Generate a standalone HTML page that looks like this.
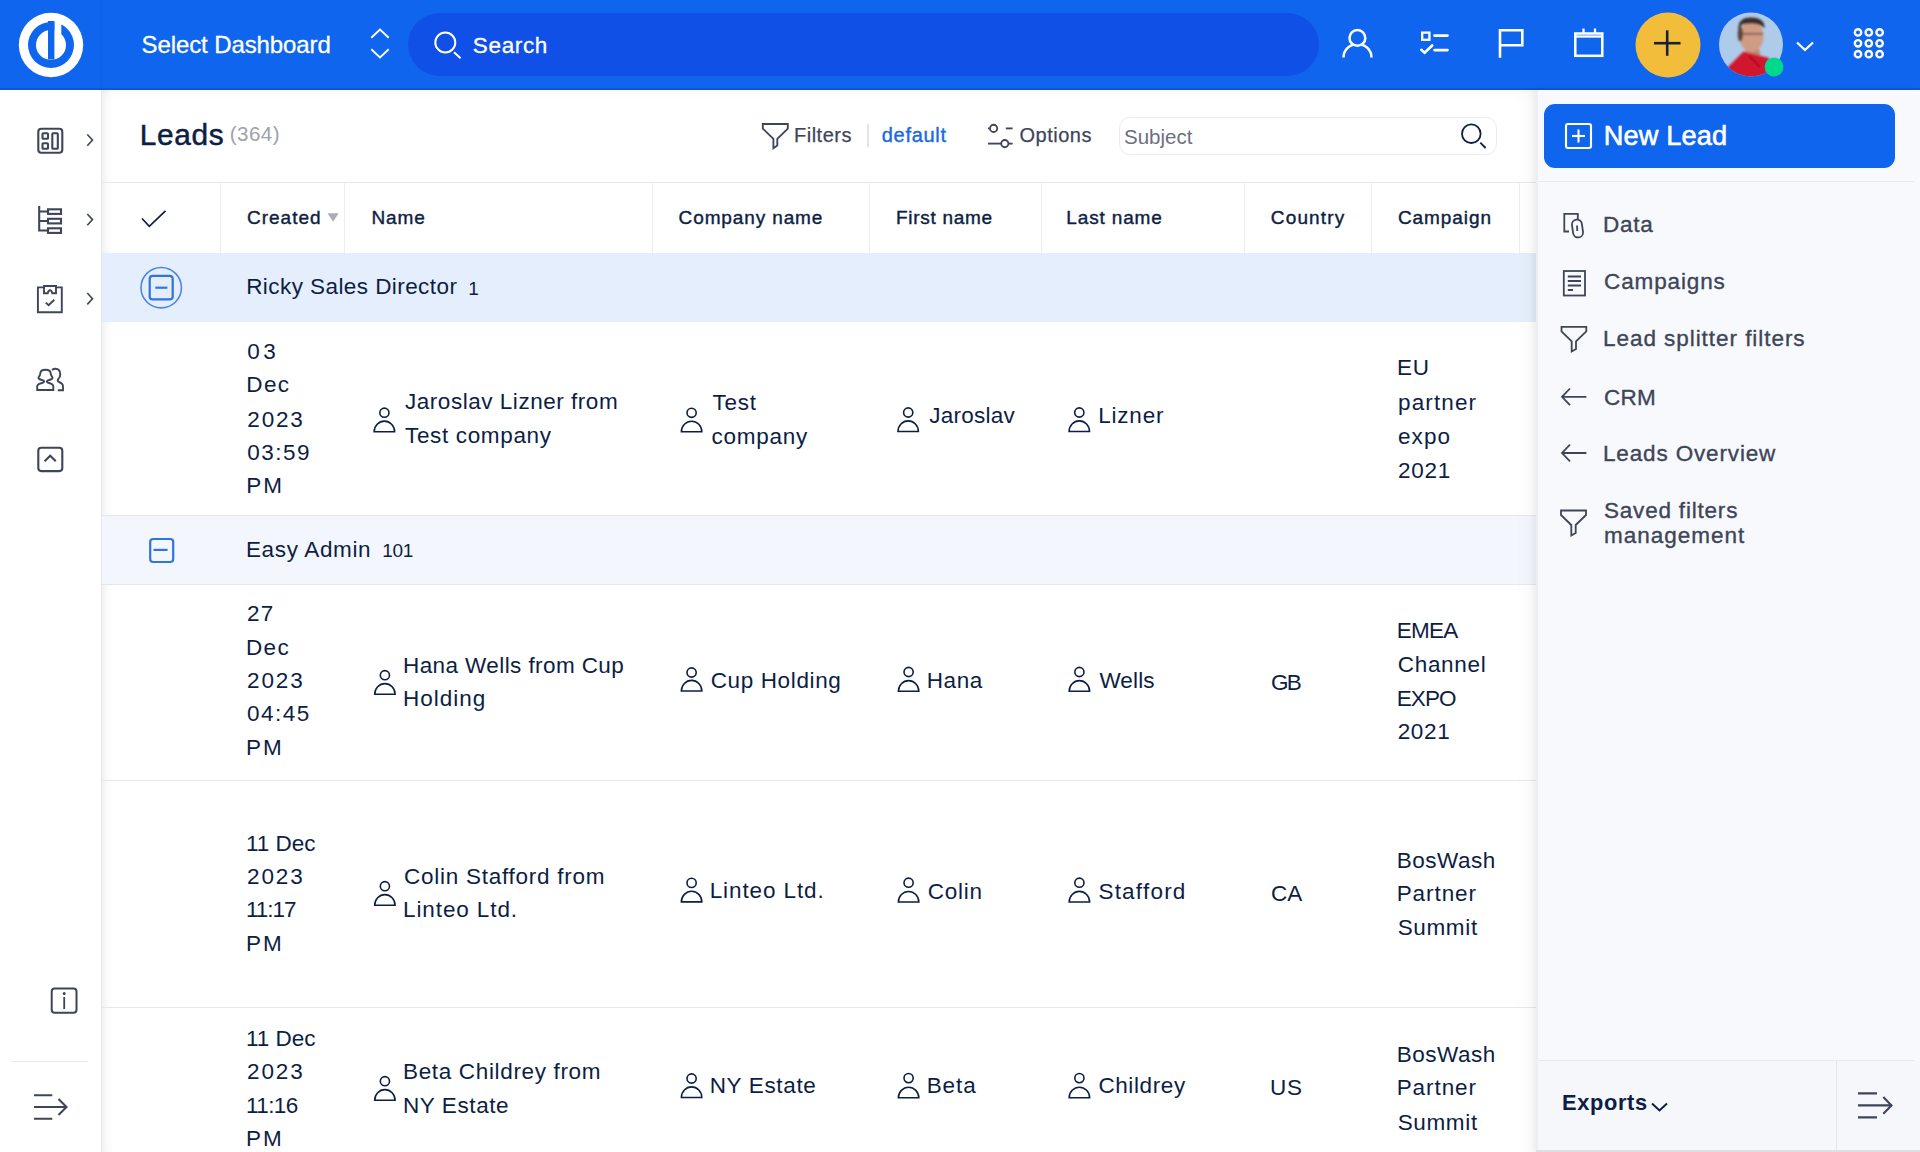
<!DOCTYPE html>
<html><head><meta charset="utf-8">
<style>
*{margin:0;padding:0;box-sizing:border-box}
html,body{width:1920px;height:1152px;overflow:hidden;background:#fff;font-family:"Liberation Sans",sans-serif}
.a{position:absolute}
.t{position:absolute;white-space:pre;font-family:"Liberation Sans",sans-serif}
svg.ov{position:absolute;left:0;top:0;width:1920px;height:1152px}
</style></head><body>
<!-- header -->
<div class="a" style="left:0;top:0;width:1920px;height:90px;background:#1065ee"></div>
<div class="a" style="left:0;top:88px;width:1920px;height:2px;background:#0c56d8"></div>
<div class="a" style="left:101px;top:0;width:1px;height:88px;background:#0e61e8"></div>
<div class="a" style="left:408px;top:13px;width:911px;height:63px;border-radius:32px;background:#1150e6"></div>
<!-- sidebar -->
<div class="a" style="left:0;top:90px;width:102px;height:1062px;background:#fff"></div>
<div class="a" style="left:101px;top:90px;width:1px;height:1062px;background:#e6e7ea"></div>
<div class="a" style="left:12px;top:1061px;width:76px;height:1px;background:#e8eaee"></div>
<!-- main -->
<div class="a" style="left:102px;top:90px;width:1434px;height:1062px;background:#fff;box-shadow:inset 10px 0 10px -7px rgba(0,0,0,0.07), inset 0 8px 8px -6px rgba(0,0,0,0.045)"></div>
<div class="a" style="left:102px;top:182px;width:1434px;height:1px;background:#e7e9ee"></div>
<div class="a" style="left:102px;top:253px;width:1434px;height:69px;background:#e5eefc"></div>
<div class="a" style="left:102px;top:515px;width:1434px;height:1px;background:#e4e8ee"></div>
<div class="a" style="left:102px;top:516px;width:1434px;height:68px;background:#f3f7fd"></div>
<div class="a" style="left:102px;top:584px;width:1434px;height:1px;background:#e4e8ee"></div>
<div class="a" style="left:102px;top:780px;width:1434px;height:1px;background:#e6e9ee"></div>
<div class="a" style="left:102px;top:1007px;width:1434px;height:1px;background:#e6e9ee"></div>
<!-- col separators -->
<div class="a" style="left:220px;top:183px;width:1px;height:70px;background:#eceef2"></div>
<div class="a" style="left:344px;top:183px;width:1px;height:70px;background:#eceef2"></div>
<div class="a" style="left:652px;top:183px;width:1px;height:70px;background:#eceef2"></div>
<div class="a" style="left:869px;top:183px;width:1px;height:70px;background:#eceef2"></div>
<div class="a" style="left:1041px;top:183px;width:1px;height:70px;background:#eceef2"></div>
<div class="a" style="left:1244px;top:183px;width:1px;height:70px;background:#eceef2"></div>
<div class="a" style="left:1371px;top:183px;width:1px;height:70px;background:#eceef2"></div>
<div class="a" style="left:1519px;top:183px;width:1px;height:70px;background:#eceef2"></div>
<div class="a" style="left:1516px;top:89px;width:20px;height:1063px;background:linear-gradient(to right,rgba(0,0,0,0),rgba(0,0,0,0.025))"></div>
<!-- filter bar -->
<div class="a" style="left:867px;top:124px;width:2px;height:23px;background:#e1e4ea"></div>
<div class="a" style="left:1119px;top:117px;width:378px;height:38px;border:1px solid #e8ebf2;border-radius:11px;background:#fff"></div>
<!-- right panel -->
<div class="a" style="left:1536px;top:90px;width:384px;height:1062px;background:#f8f9fc;box-shadow:-3px 0 6px rgba(0,0,0,0.05)"></div>
<div class="a" style="left:1536px;top:90px;width:2px;height:1062px;background:#eceef2"></div>
<div class="a" style="left:1538px;top:181px;width:376px;height:1px;background:#e8eaef"></div>
<div class="a" style="left:1538px;top:1060px;width:376px;height:1px;background:#e6e8ee"></div>
<div class="a" style="left:1538px;top:1061px;width:382px;height:91px;background:#f5f7fb"></div>
<div class="a" style="left:1836px;top:1061px;width:1px;height:91px;background:#e4e6ec"></div>
<div class="a" style="left:1536px;top:1150px;width:384px;height:2px;background:#dde0e6"></div>
<div class="a" style="left:1543.5px;top:103.5px;width:351px;height:64px;border-radius:11px;background:#1065ee"></div>
<div class="t" style="left:141.5px;top:28.7px;font-size:24px;line-height:31px;font-weight:400;color:#ffffff;letter-spacing:-0.10px;-webkit-text-stroke:0.3px #ffffff">Select Dashboard</div>
<div class="t" style="left:472.8px;top:30.7px;font-size:22.5px;line-height:29px;font-weight:400;color:#ffffff;letter-spacing:0.66px;-webkit-text-stroke:0.3px #ffffff">Search</div>
<div class="t" style="left:139.7px;top:114.9px;font-size:29.8px;line-height:39px;font-weight:400;color:#0d1e44;letter-spacing:0.70px;-webkit-text-stroke:0.5px #0d1e44">Leads</div>
<div class="t" style="left:229.8px;top:120.2px;font-size:20.5px;line-height:27px;font-weight:400;color:#9da2ac;letter-spacing:0.47px;-webkit-text-stroke:0px #9da2ac">(364)</div>
<div class="t" style="left:794.0px;top:122.2px;font-size:20px;line-height:26px;font-weight:400;color:#3e4559;letter-spacing:0.50px;-webkit-text-stroke:0.25px #3e4559">Filters</div>
<div class="t" style="left:881.8px;top:122.2px;font-size:20px;line-height:26px;font-weight:400;color:#1b6ae0;letter-spacing:0.70px;-webkit-text-stroke:0.4px #1b6ae0">default</div>
<div class="t" style="left:1019.5px;top:122.2px;font-size:20px;line-height:26px;font-weight:400;color:#3e4559;letter-spacing:0.50px;-webkit-text-stroke:0.25px #3e4559">Options</div>
<div class="t" style="left:1124.0px;top:123.0px;font-size:20.5px;line-height:27px;font-weight:400;color:#6b7080;letter-spacing:0.00px;-webkit-text-stroke:0px #6b7080">Subject</div>
<div class="t" style="left:247.0px;top:205.3px;font-size:19px;line-height:25px;font-weight:400;color:#0d1e44;letter-spacing:1.00px;-webkit-text-stroke:0.4px #0d1e44">Created</div>
<div class="t" style="left:371.5px;top:205.3px;font-size:19px;line-height:25px;font-weight:400;color:#0d1e44;letter-spacing:0.90px;-webkit-text-stroke:0.4px #0d1e44">Name</div>
<div class="t" style="left:678.6px;top:205.3px;font-size:19px;line-height:25px;font-weight:400;color:#0d1e44;letter-spacing:0.88px;-webkit-text-stroke:0.4px #0d1e44">Company name</div>
<div class="t" style="left:895.9px;top:205.3px;font-size:19px;line-height:25px;font-weight:400;color:#0d1e44;letter-spacing:0.72px;-webkit-text-stroke:0.4px #0d1e44">First name</div>
<div class="t" style="left:1066.3px;top:205.3px;font-size:19px;line-height:25px;font-weight:400;color:#0d1e44;letter-spacing:0.85px;-webkit-text-stroke:0.4px #0d1e44">Last name</div>
<div class="t" style="left:1270.8px;top:205.3px;font-size:19px;line-height:25px;font-weight:400;color:#0d1e44;letter-spacing:1.15px;-webkit-text-stroke:0.4px #0d1e44">Country</div>
<div class="t" style="left:1397.9px;top:205.3px;font-size:19px;line-height:25px;font-weight:400;color:#0d1e44;letter-spacing:0.94px;-webkit-text-stroke:0.4px #0d1e44">Campaign</div>
<div class="t" style="left:246.2px;top:272.3px;font-size:22.5px;line-height:29px;font-weight:400;color:#0d1e44;letter-spacing:0.43px;-webkit-text-stroke:0px #0d1e44">Ricky Sales Director</div>
<div class="t" style="left:468.3px;top:275.5px;font-size:19px;line-height:25px;font-weight:400;color:#0d1e44;letter-spacing:0.00px;-webkit-text-stroke:0px #0d1e44">1</div>
<div class="t" style="left:245.9px;top:535.2px;font-size:22.5px;line-height:29px;font-weight:400;color:#0d1e44;letter-spacing:0.66px;-webkit-text-stroke:0px #0d1e44">Easy Admin</div>
<div class="t" style="left:382.3px;top:538.4px;font-size:19px;line-height:25px;font-weight:400;color:#0d1e44;letter-spacing:-0.40px;-webkit-text-stroke:0px #0d1e44">101</div>
<div class="t" style="left:247.3px;top:336.6px;font-size:22.5px;line-height:29px;font-weight:400;color:#0d1e44;letter-spacing:3.50px;-webkit-text-stroke:0px #0d1e44">03</div>
<div class="t" style="left:246.3px;top:369.9px;font-size:22.5px;line-height:29px;font-weight:400;color:#0d1e44;letter-spacing:1.35px;-webkit-text-stroke:0px #0d1e44">Dec</div>
<div class="t" style="left:247.3px;top:404.5px;font-size:22.5px;line-height:29px;font-weight:400;color:#0d1e44;letter-spacing:1.83px;-webkit-text-stroke:0px #0d1e44">2023</div>
<div class="t" style="left:247.3px;top:437.7px;font-size:22.5px;line-height:29px;font-weight:400;color:#0d1e44;letter-spacing:1.50px;-webkit-text-stroke:0px #0d1e44">03:59</div>
<div class="t" style="left:246.3px;top:471.0px;font-size:22.5px;line-height:29px;font-weight:400;color:#0d1e44;letter-spacing:2.00px;-webkit-text-stroke:0px #0d1e44">PM</div>
<div class="t" style="left:405.0px;top:387.4px;font-size:22.5px;line-height:29px;font-weight:400;color:#0d1e44;letter-spacing:0.53px;-webkit-text-stroke:0px #0d1e44">Jaroslav Lizner from</div>
<div class="t" style="left:405.0px;top:421.3px;font-size:22.5px;line-height:29px;font-weight:400;color:#0d1e44;letter-spacing:0.65px;-webkit-text-stroke:0px #0d1e44">Test company</div>
<div class="t" style="left:712.5px;top:387.5px;font-size:22.5px;line-height:29px;font-weight:400;color:#0d1e44;letter-spacing:0.77px;-webkit-text-stroke:0px #0d1e44">Test</div>
<div class="t" style="left:711.5px;top:421.7px;font-size:22.5px;line-height:29px;font-weight:400;color:#0d1e44;letter-spacing:0.73px;-webkit-text-stroke:0px #0d1e44">company</div>
<div class="t" style="left:929.2px;top:401.2px;font-size:22.5px;line-height:29px;font-weight:400;color:#0d1e44;letter-spacing:0.26px;-webkit-text-stroke:0px #0d1e44">Jaroslav</div>
<div class="t" style="left:1098.2px;top:401.2px;font-size:22.5px;line-height:29px;font-weight:400;color:#0d1e44;letter-spacing:0.80px;-webkit-text-stroke:0px #0d1e44">Lizner</div>
<div class="t" style="left:1397.0px;top:353.3px;font-size:22.5px;line-height:29px;font-weight:400;color:#0d1e44;letter-spacing:0.80px;-webkit-text-stroke:0px #0d1e44">EU</div>
<div class="t" style="left:1398.0px;top:387.5px;font-size:22.5px;line-height:29px;font-weight:400;color:#0d1e44;letter-spacing:1.12px;-webkit-text-stroke:0px #0d1e44">partner</div>
<div class="t" style="left:1398.0px;top:421.7px;font-size:22.5px;line-height:29px;font-weight:400;color:#0d1e44;letter-spacing:1.07px;-webkit-text-stroke:0px #0d1e44">expo</div>
<div class="t" style="left:1398.0px;top:456.0px;font-size:22.5px;line-height:29px;font-weight:400;color:#0d1e44;letter-spacing:0.73px;-webkit-text-stroke:0px #0d1e44">2021</div>
<div class="t" style="left:247.0px;top:599.4px;font-size:22.5px;line-height:29px;font-weight:400;color:#0d1e44;letter-spacing:1.30px;-webkit-text-stroke:0px #0d1e44">27</div>
<div class="t" style="left:246.0px;top:632.7px;font-size:22.5px;line-height:29px;font-weight:400;color:#0d1e44;letter-spacing:1.35px;-webkit-text-stroke:0px #0d1e44">Dec</div>
<div class="t" style="left:247.0px;top:666.0px;font-size:22.5px;line-height:29px;font-weight:400;color:#0d1e44;letter-spacing:1.90px;-webkit-text-stroke:0px #0d1e44">2023</div>
<div class="t" style="left:247.0px;top:699.4px;font-size:22.5px;line-height:29px;font-weight:400;color:#0d1e44;letter-spacing:1.50px;-webkit-text-stroke:0px #0d1e44">04:45</div>
<div class="t" style="left:246.0px;top:732.7px;font-size:22.5px;line-height:29px;font-weight:400;color:#0d1e44;letter-spacing:2.00px;-webkit-text-stroke:0px #0d1e44">PM</div>
<div class="t" style="left:403.0px;top:651.0px;font-size:22.5px;line-height:29px;font-weight:400;color:#0d1e44;letter-spacing:0.41px;-webkit-text-stroke:0px #0d1e44">Hana Wells from Cup</div>
<div class="t" style="left:403.0px;top:684.4px;font-size:22.5px;line-height:29px;font-weight:400;color:#0d1e44;letter-spacing:1.00px;-webkit-text-stroke:0px #0d1e44">Holding</div>
<div class="t" style="left:710.7px;top:666.0px;font-size:22.5px;line-height:29px;font-weight:400;color:#0d1e44;letter-spacing:0.63px;-webkit-text-stroke:0px #0d1e44">Cup Holding</div>
<div class="t" style="left:926.7px;top:665.6px;font-size:22.5px;line-height:29px;font-weight:400;color:#0d1e44;letter-spacing:0.60px;-webkit-text-stroke:0px #0d1e44">Hana</div>
<div class="t" style="left:1099.4px;top:665.6px;font-size:22.5px;line-height:29px;font-weight:400;color:#0d1e44;letter-spacing:0.15px;-webkit-text-stroke:0px #0d1e44">Wells</div>
<div class="t" style="left:1271.0px;top:668.1px;font-size:22.5px;line-height:29px;font-weight:400;color:#0d1e44;letter-spacing:-1.80px;-webkit-text-stroke:0px #0d1e44">GB</div>
<div class="t" style="left:1396.7px;top:616.3px;font-size:22.5px;line-height:29px;font-weight:400;color:#0d1e44;letter-spacing:-0.70px;-webkit-text-stroke:0px #0d1e44">EMEA</div>
<div class="t" style="left:1397.7px;top:650.4px;font-size:22.5px;line-height:29px;font-weight:400;color:#0d1e44;letter-spacing:0.72px;-webkit-text-stroke:0px #0d1e44">Channel</div>
<div class="t" style="left:1396.7px;top:683.9px;font-size:22.5px;line-height:29px;font-weight:400;color:#0d1e44;letter-spacing:-0.90px;-webkit-text-stroke:0px #0d1e44">EXPO</div>
<div class="t" style="left:1397.7px;top:717.3px;font-size:22.5px;line-height:29px;font-weight:400;color:#0d1e44;letter-spacing:0.67px;-webkit-text-stroke:0px #0d1e44">2021</div>
<div class="t" style="left:246.0px;top:828.7px;font-size:22.5px;line-height:29px;font-weight:400;color:#0d1e44;letter-spacing:0.00px;-webkit-text-stroke:0px #0d1e44">11 Dec</div>
<div class="t" style="left:247.0px;top:862.0px;font-size:22.5px;line-height:29px;font-weight:400;color:#0d1e44;letter-spacing:1.90px;-webkit-text-stroke:0px #0d1e44">2023</div>
<div class="t" style="left:246.0px;top:895.4px;font-size:22.5px;line-height:29px;font-weight:400;color:#0d1e44;letter-spacing:-1.00px;-webkit-text-stroke:0px #0d1e44">11:17</div>
<div class="t" style="left:246.0px;top:929.4px;font-size:22.5px;line-height:29px;font-weight:400;color:#0d1e44;letter-spacing:2.00px;-webkit-text-stroke:0px #0d1e44">PM</div>
<div class="t" style="left:404.0px;top:862.0px;font-size:22.5px;line-height:29px;font-weight:400;color:#0d1e44;letter-spacing:0.74px;-webkit-text-stroke:0px #0d1e44">Colin Stafford from</div>
<div class="t" style="left:403.0px;top:895.4px;font-size:22.5px;line-height:29px;font-weight:400;color:#0d1e44;letter-spacing:0.90px;-webkit-text-stroke:0px #0d1e44">Linteo Ltd.</div>
<div class="t" style="left:709.7px;top:876.0px;font-size:22.5px;line-height:29px;font-weight:400;color:#0d1e44;letter-spacing:0.90px;-webkit-text-stroke:0px #0d1e44">Linteo Ltd.</div>
<div class="t" style="left:927.7px;top:877.0px;font-size:22.5px;line-height:29px;font-weight:400;color:#0d1e44;letter-spacing:0.78px;-webkit-text-stroke:0px #0d1e44">Colin</div>
<div class="t" style="left:1098.4px;top:877.0px;font-size:22.5px;line-height:29px;font-weight:400;color:#0d1e44;letter-spacing:1.23px;-webkit-text-stroke:0px #0d1e44">Stafford</div>
<div class="t" style="left:1271.0px;top:879.1px;font-size:22.5px;line-height:29px;font-weight:400;color:#0d1e44;letter-spacing:-0.10px;-webkit-text-stroke:0px #0d1e44">CA</div>
<div class="t" style="left:1396.7px;top:845.7px;font-size:22.5px;line-height:29px;font-weight:400;color:#0d1e44;letter-spacing:0.52px;-webkit-text-stroke:0px #0d1e44">BosWash</div>
<div class="t" style="left:1396.7px;top:879.1px;font-size:22.5px;line-height:29px;font-weight:400;color:#0d1e44;letter-spacing:0.92px;-webkit-text-stroke:0px #0d1e44">Partner</div>
<div class="t" style="left:1397.7px;top:912.6px;font-size:22.5px;line-height:29px;font-weight:400;color:#0d1e44;letter-spacing:0.64px;-webkit-text-stroke:0px #0d1e44">Summit</div>
<div class="t" style="left:246.0px;top:1024.4px;font-size:22.5px;line-height:29px;font-weight:400;color:#0d1e44;letter-spacing:0.00px;-webkit-text-stroke:0px #0d1e44">11 Dec</div>
<div class="t" style="left:247.0px;top:1057.0px;font-size:22.5px;line-height:29px;font-weight:400;color:#0d1e44;letter-spacing:1.90px;-webkit-text-stroke:0px #0d1e44">2023</div>
<div class="t" style="left:246.0px;top:1091.0px;font-size:22.5px;line-height:29px;font-weight:400;color:#0d1e44;letter-spacing:-0.58px;-webkit-text-stroke:0px #0d1e44">11:16</div>
<div class="t" style="left:246.0px;top:1124.4px;font-size:22.5px;line-height:29px;font-weight:400;color:#0d1e44;letter-spacing:2.00px;-webkit-text-stroke:0px #0d1e44">PM</div>
<div class="t" style="left:403.0px;top:1057.0px;font-size:22.5px;line-height:29px;font-weight:400;color:#0d1e44;letter-spacing:0.66px;-webkit-text-stroke:0px #0d1e44">Beta Childrey from</div>
<div class="t" style="left:403.0px;top:1091.0px;font-size:22.5px;line-height:29px;font-weight:400;color:#0d1e44;letter-spacing:0.59px;-webkit-text-stroke:0px #0d1e44">NY Estate</div>
<div class="t" style="left:709.7px;top:1071.0px;font-size:22.5px;line-height:29px;font-weight:400;color:#0d1e44;letter-spacing:0.66px;-webkit-text-stroke:0px #0d1e44">NY Estate</div>
<div class="t" style="left:926.7px;top:1071.0px;font-size:22.5px;line-height:29px;font-weight:400;color:#0d1e44;letter-spacing:0.93px;-webkit-text-stroke:0px #0d1e44">Beta</div>
<div class="t" style="left:1098.4px;top:1071.0px;font-size:22.5px;line-height:29px;font-weight:400;color:#0d1e44;letter-spacing:0.61px;-webkit-text-stroke:0px #0d1e44">Childrey</div>
<div class="t" style="left:1270.0px;top:1072.7px;font-size:22.5px;line-height:29px;font-weight:400;color:#0d1e44;letter-spacing:0.80px;-webkit-text-stroke:0px #0d1e44">US</div>
<div class="t" style="left:1396.7px;top:1040.0px;font-size:22.5px;line-height:29px;font-weight:400;color:#0d1e44;letter-spacing:0.52px;-webkit-text-stroke:0px #0d1e44">BosWash</div>
<div class="t" style="left:1396.7px;top:1072.7px;font-size:22.5px;line-height:29px;font-weight:400;color:#0d1e44;letter-spacing:0.92px;-webkit-text-stroke:0px #0d1e44">Partner</div>
<div class="t" style="left:1397.7px;top:1108.0px;font-size:22.5px;line-height:29px;font-weight:400;color:#0d1e44;letter-spacing:0.64px;-webkit-text-stroke:0px #0d1e44">Summit</div>
<div class="t" style="left:1603.7px;top:118.0px;font-size:27.2px;line-height:35px;font-weight:400;color:#ffffff;letter-spacing:0.14px;-webkit-text-stroke:0.6px #ffffff">New Lead</div>
<div class="t" style="left:1603.0px;top:210.2px;font-size:22.5px;line-height:29px;font-weight:400;color:#3e4559;letter-spacing:0.77px;-webkit-text-stroke:0.35px #3e4559">Data</div>
<div class="t" style="left:1604.0px;top:267.4px;font-size:22.5px;line-height:29px;font-weight:400;color:#3e4559;letter-spacing:0.88px;-webkit-text-stroke:0.35px #3e4559">Campaigns</div>
<div class="t" style="left:1603.0px;top:324.4px;font-size:22.5px;line-height:29px;font-weight:400;color:#3e4559;letter-spacing:0.95px;-webkit-text-stroke:0.35px #3e4559">Lead splitter filters</div>
<div class="t" style="left:1604.0px;top:382.7px;font-size:22.5px;line-height:29px;font-weight:400;color:#3e4559;letter-spacing:0.20px;-webkit-text-stroke:0.35px #3e4559">CRM</div>
<div class="t" style="left:1603.0px;top:438.7px;font-size:22.5px;line-height:29px;font-weight:400;color:#3e4559;letter-spacing:0.85px;-webkit-text-stroke:0.35px #3e4559">Leads Overview</div>
<div class="t" style="left:1604.0px;top:495.7px;font-size:22.5px;line-height:29px;font-weight:400;color:#3e4559;letter-spacing:0.80px;-webkit-text-stroke:0.35px #3e4559">Saved filters</div>
<div class="t" style="left:1604.0px;top:520.7px;font-size:22.5px;line-height:29px;font-weight:400;color:#3e4559;letter-spacing:1.00px;-webkit-text-stroke:0.35px #3e4559">management</div>
<div class="t" style="left:1562.0px;top:1089.4px;font-size:21.8px;line-height:28px;font-weight:700;color:#0d1e44;letter-spacing:0.67px;-webkit-text-stroke:0px #0d1e44">Exports</div>
<svg class="ov" viewBox="0 0 1920 1152" fill="none" stroke-linecap="butt" stroke-linejoin="miter">
 <defs>
  <clipPath id="av"><circle cx="1751" cy="44.5" r="32"/></clipPath>
  <filter id="bl" x="-20%" y="-20%" width="140%" height="140%"><feGaussianBlur stdDeviation="1.2"/></filter>
 </defs>
 <!-- logo -->
 <circle cx="51" cy="45" r="32.2" fill="#fff"/>
 <circle cx="51" cy="45" r="23" fill="#1065ee"/>
 <circle cx="51" cy="45" r="15" fill="#fff"/>
 <polygon points="54.4,22 61.3,23.8 61.3,34 54.4,34" fill="#fff"/>
 <rect x="48" y="21" width="6.4" height="38.5" fill="#1065ee"/>
 <!-- header icons -->
 <g stroke="#fff" stroke-width="2.3">
  <polyline points="371.3,37.8 380,29.6 388.7,37.8" stroke-width="1.9"/>
  <polyline points="371.3,49.2 380,57.4 388.7,49.2" stroke-width="1.9"/>
  <circle cx="445.3" cy="42.5" r="10" stroke-width="2"/>
  <line x1="454" y1="52.3" x2="460.6" y2="58.3" stroke-width="2"/>
  <path d="M1343.5 57.5 A14 13.5 0 0 1 1371.5 57.5" stroke-width="2.5"/>
  <circle cx="1357.4" cy="37.9" r="7.9" stroke-width="2.5" fill="#1065ee"/>
  <rect x="1422.2" y="32.6" width="7.2" height="7.2" stroke-width="2.3"/>
  <line x1="1434.5" y1="35.6" x2="1447.5" y2="35.6" stroke-width="2.6" stroke-linecap="round"/>
  <polyline points="1421.3,49.8 1424.6,52.8 1432.2,45.5" stroke-width="2.6" stroke-linecap="round"/>
  <line x1="1434.5" y1="50.1" x2="1447.5" y2="50.1" stroke-width="2.6" stroke-linecap="round"/>
  <path d="M1500 57.8 V30.2 H1522.3 V45.2 H1500" stroke-width="2.6"/>
  <rect x="1575.3" y="33.5" width="27" height="22.3" stroke-width="2.5"/>
  <line x1="1575" y1="36.5" x2="1602.5" y2="36.5" stroke-width="2.3"/>
  <line x1="1583.5" y1="28.5" x2="1583.5" y2="33" stroke-width="2.3"/>
  <line x1="1595" y1="28.5" x2="1595" y2="33" stroke-width="2.3"/>
  <polyline points="1797,42.5 1805,50 1813,42.5"/>
 </g>
 <g stroke="#fff" stroke-width="2.4">
  <circle cx="1858" cy="32.4" r="3.2"/><circle cx="1868.8" cy="32.4" r="3.2"/><circle cx="1879.6" cy="32.4" r="3.2"/>
  <circle cx="1858" cy="43.3" r="3.2"/><circle cx="1868.8" cy="43.3" r="3.2"/><circle cx="1879.6" cy="43.3" r="3.2"/>
  <circle cx="1858" cy="54.2" r="3.2"/><circle cx="1868.8" cy="54.2" r="3.2"/><circle cx="1879.6" cy="54.2" r="3.2"/>
 </g>
 <circle cx="1668" cy="45" r="32.5" fill="#f2bd3b"/>
 <g stroke="#16223a" stroke-width="2.6">
  <line x1="1654" y1="43.2" x2="1680.5" y2="43.2"/><line x1="1667.2" y1="30.3" x2="1667.2" y2="55.8"/>
 </g>
 <!-- avatar -->
 <g clip-path="url(#av)">
  <rect x="1715" y="10" width="72" height="72" fill="#afcbea"/>
  <g filter="url(#bl)">
   <path d="M1758 47 L1761 57 L1746 55 L1745 47 Z" fill="#bf846e"/>
   <ellipse cx="1751.5" cy="36.5" rx="12" ry="15.5" fill="#cf9b85"/>
   <path d="M1738.5 31 Q1737 17 1751.5 17.5 Q1765 18 1764.5 28 Q1757 21.5 1742 24.5 Z" fill="#3a2e2a"/>
   <ellipse cx="1740.3" cy="34" rx="2.6" ry="7.5" fill="#5b4239"/>
   <line x1="1741" y1="33.8" x2="1763" y2="33.8" stroke="#70503f" stroke-width="1.6"/>
   <path d="M1723 72 L1743.5 51.5 L1757.5 55 L1769 58 L1771 82 L1723 82 Z" fill="#d2122e"/>
   <line x1="1749" y1="56" x2="1760" y2="67" stroke="#8e0b1c" stroke-width="1.5"/>
  </g>
 </g>
 <circle cx="1774" cy="67" r="9.4" fill="#00d98b"/>
 <!-- sidebar icons -->
 <g stroke="#3e4559" stroke-width="2.1">
  <rect x="38.3" y="128.8" width="24" height="24" rx="3"/>
  <rect x="42.5" y="133.2" width="5.5" height="5.5" rx="0.8"/>
  <rect x="42.5" y="143.2" width="5.5" height="5.5" rx="0.8"/>
  <rect x="52.3" y="133.2" width="5.5" height="15.5" rx="0.8"/>
  <polyline points="87.3,134.5 92.5,140 87.3,145.8" stroke-width="1.6"/>
  <path d="M39.2 206 V231.5 M39.2 211.5 H47.5 M39.2 221 H47.5 M39.2 230.5 H47.5"/>
  <rect x="48" y="209.3" width="13" height="4.6"/>
  <rect x="48" y="218.8" width="13" height="4.6"/>
  <rect x="48" y="228.3" width="13" height="4.6"/>
  <polyline points="87.3,214 92.5,219.6 87.3,225.3" stroke-width="1.6"/>
  <path d="M44 287.4 H37.9 V312.3 H61.8 V287.4 H56" stroke-width="1.9"/>
  <path d="M44 286 H56 V293.2 H52.3 Q51.5 290.2 50 290.2 Q48.5 290.2 47.7 293.2 H44 Z" stroke-width="1.9"/>
  <polyline points="45.8,302.6 48.6,305.3 54.3,299.8" stroke-width="1.9"/>
  <polyline points="87.3,293 92.5,298.7 87.3,304.4" stroke-width="1.6"/>
  <path d="M37.2 390 H53.3 V386.5 Q53.3 384 49 383 Q46.8 382.5 46.8 381.5 Q46.8 380.5 49 380 Q53 379 52.5 377.5 Q50.8 375 50.8 374 Q50.8 369.8 45.5 369.8 Q40.2 369.8 40.2 374 Q40.2 375 38.5 377.5 Q38 379 42 380 Q44.2 380.5 44.2 381.5 Q44.2 382.5 42 383 Q37.2 384 37.2 386.5 Z" stroke-width="1.9"/>
  <path d="M52 370 Q53.5 368.8 55.3 368.8 Q60.3 368.8 60.3 374.5 Q60.3 377 58 379.5 Q57 381 59 382 Q63 383.5 63 386.5 V390.2 H57.8" stroke-width="1.9"/>
  <rect x="38.3" y="447.8" width="24" height="23.3" rx="3"/>
  <polyline points="44.6,461.3 50.2,455.8 55.8,461.3"/>
  <rect x="51.7" y="988.5" width="24.8" height="24.3" rx="3" stroke-width="2"/>
  <line x1="64.2" y1="997" x2="64.2" y2="1009" stroke-width="1.8"/>
  <path d="M34 1095.3 H52.3 M34 1107 H66.5 M34 1118.7 H52.3" stroke-width="2.1"/>
  <polyline points="58.5,1099 66.5,1107 58.5,1115" stroke-width="2.1"/>
 </g>
 <circle cx="64.2" cy="993.6" r="1.5" fill="#3e4559"/>
 <!-- main icons -->
 <g stroke="#3e4559" stroke-width="1.85">
  <path d="M762.8 124 H787.8 V128.6 L777.3 138.8 V145.6 L773.4 148.2 V138.8 L762.8 128.6 Z"/>
  <line x1="988" y1="128.4" x2="989.6" y2="128.4"/><circle cx="993.6" cy="128.4" r="3.6"/><line x1="1005.8" y1="128.4" x2="1012.6" y2="128.4"/>
  <line x1="988" y1="143.6" x2="1001" y2="143.6"/><circle cx="1004.8" cy="143.6" r="3.6"/><line x1="1008.6" y1="143.6" x2="1012.6" y2="143.6"/>
 </g>
 <g stroke="#0d1e44" stroke-width="2.1">
  <circle cx="1471.3" cy="133.7" r="9.3" stroke-width="1.8"/>
  <line x1="1480.3" y1="142.7" x2="1485.6" y2="148" stroke-width="1.8"/>
  <polyline points="142,218.5 149.3,226.3 165.5,210.8" stroke-width="1.7"/>
 </g>
 <polygon points="327.5,213.3 338.7,213.3 333.1,221.7" fill="#aaadb8"/>
 <g stroke="#2f74e2">
  <circle cx="161.2" cy="287.7" r="20.2" stroke-width="1.6" stroke="#4a87e8"/>
  <rect x="149.7" y="275.8" width="23" height="23.6" rx="3" stroke-width="2.2"/>
  <line x1="155.3" y1="287.7" x2="167.4" y2="287.7" stroke-width="2.2"/>
  <rect x="150.2" y="539" width="23" height="23" rx="3" stroke-width="2.2"/>
  <line x1="153.5" y1="549.9" x2="167.6" y2="549.9" stroke-width="2.2"/>
 </g>
 <g stroke="#0d1e44" stroke-width="1.6" id="persons">
  <circle cx="384.4" cy="412.7" r="4.6"/><path d="M374.2 431.7 H394.6 A10.2 10.6 0 0 0 374.2 431.7 Z"/>
  <circle cx="691.6" cy="412.8" r="4.6"/><path d="M681.4 431.8 H701.8 A10.2 10.6 0 0 0 681.4 431.8 Z"/>
  <circle cx="908.2" cy="412.5" r="4.6"/><path d="M898.0 431.5 H918.4 A10.2 10.6 0 0 0 898.0 431.5 Z"/>
  <circle cx="1079.3" cy="412.5" r="4.6"/><path d="M1069.1 431.5 H1089.5 A10.2 10.6 0 0 0 1069.1 431.5 Z"/>
  <circle cx="384.9" cy="675.2" r="4.6"/><path d="M374.7 694.2 H395.1 A10.2 10.6 0 0 0 374.7 694.2 Z"/>
  <circle cx="691.6" cy="672.5" r="4.6"/><path d="M681.4 691.0 H701.8 A10.2 10.6 0 0 0 681.4 691.0 Z"/>
  <circle cx="908.6" cy="672.0" r="4.6"/><path d="M898.4 691.2 H918.8 A10.2 10.6 0 0 0 898.4 691.2 Z"/>
  <circle cx="1079.4" cy="672.0" r="4.6"/><path d="M1069.2 691.2 H1089.6 A10.2 10.6 0 0 0 1069.2 691.2 Z"/>
  <circle cx="384.9" cy="886.2" r="4.6"/><path d="M374.7 905.2 H395.1 A10.2 10.6 0 0 0 374.7 905.2 Z"/>
  <circle cx="691.6" cy="882.9" r="4.6"/><path d="M681.4 901.9 H701.8 A10.2 10.6 0 0 0 681.4 901.9 Z"/>
  <circle cx="908.6" cy="882.7" r="4.6"/><path d="M898.4 902.0 H918.8 A10.2 10.6 0 0 0 898.4 902.0 Z"/>
  <circle cx="1079.4" cy="882.7" r="4.6"/><path d="M1069.2 902.0 H1089.6 A10.2 10.6 0 0 0 1069.2 902.0 Z"/>
  <circle cx="384.9" cy="1081.2" r="4.6"/><path d="M374.7 1100.2 H395.1 A10.2 10.6 0 0 0 374.7 1100.2 Z"/>
  <circle cx="691.6" cy="1078.5" r="4.6"/><path d="M681.4 1097.5 H701.8 A10.2 10.6 0 0 0 681.4 1097.5 Z"/>
  <circle cx="908.6" cy="1078.1" r="4.6"/><path d="M898.4 1097.8 H918.8 A10.2 10.6 0 0 0 898.4 1097.8 Z"/>
  <circle cx="1079.4" cy="1078.1" r="4.6"/><path d="M1069.2 1097.8 H1089.6 A10.2 10.6 0 0 0 1069.2 1097.8 Z"/>
 </g>
 <!-- right panel icons -->
 <g stroke="#fff" stroke-width="2.1">
  <rect x="1566" y="124" width="25" height="24" rx="2"/>
  <line x1="1578.5" y1="129.5" x2="1578.5" y2="142.5"/><line x1="1572" y1="136" x2="1585" y2="136"/>
 </g>
 <g stroke="#3e4559" stroke-width="1.8">
  <path d="M1569 231.5 H1564.3 V213.8 H1577.8 V220"/>
  <rect x="1572.5" y="219.5" width="10" height="18" rx="5" transform="rotate(-8 1577.5 228.5)"/>
  <line x1="1577" y1="225.5" x2="1577.3" y2="231"/>
  <rect x="1563.8" y="271" width="21.2" height="24.5"/>
  <path d="M1567.8 276.5 H1581 M1567.8 281 H1581 M1567.8 285.5 H1581 M1567.8 290 H1573"/>
  <path d="M1561.5 326.8 H1586.3 V331.3 L1576 341.3 V349 L1571.7 351.5 V341.3 L1561.5 331.3 Z"/>
  <path d="M1562 396.8 H1586.4 M1570 388.5 L1562 396.8 L1570 405.2"/>
  <path d="M1562 453 H1586.4 M1570 444.7 L1562 453 L1570 461.4"/>
  <path d="M1561 510.5 H1586 V515 L1575.7 525 V533 L1571.3 535.5 V525 L1561 515 Z"/>
 </g>
 <g stroke="#0d1e44" stroke-width="2">
  <polyline points="1652,1103.5 1659.5,1110.5 1667,1103.5"/>
 </g>
 <g stroke="#3e4559" stroke-width="2.1">
  <path d="M1858 1093.4 H1877 M1858 1105.4 H1891.5 M1858 1117.4 H1877"/>
  <polyline points="1883.3,1097 1891.5,1105.4 1883.3,1113.8"/>
 </g>
</svg>
</body></html>
